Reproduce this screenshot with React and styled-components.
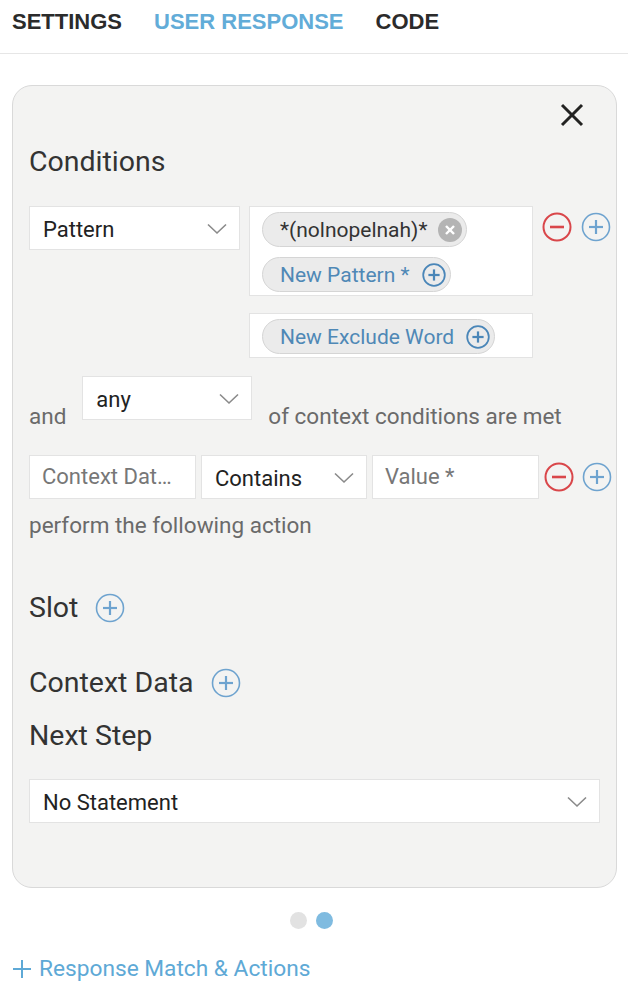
import React from 'react';
import styled, { createGlobalStyle } from 'styled-components';

const GlobalStyle = createGlobalStyle`
  * { box-sizing: border-box; }
  body {
    margin: 0;
    background: #fff;
    font-family: Roboto, "Noto Sans", sans-serif;
    color: #333;
  }
`;

const Chevron = () => (
  <svg width="20" height="12" viewBox="0 0 20 12">
    <polyline points="1,1.5 10,10 19,1.5" fill="none" stroke="#8a8a8a" strokeWidth="1.6" />
  </svg>
);

const CircleIcon = ({ kind = 'plus', color, size = 30, stroke = 1.6 }) => (
  <svg width={size} height={size} viewBox="0 0 30 30">
    <circle cx="15" cy="15" r="13.5" fill="none" stroke={color} strokeWidth={stroke} />
    <line x1="8" y1="15" x2="22" y2="15" stroke={color} strokeWidth={stroke + 0.6} />
    {kind === 'plus' && (
      <line x1="15" y1="8" x2="15" y2="22" stroke={color} strokeWidth={stroke + 0.6} />
    )}
  </svg>
);

const RemoveDot = () => (
  <svg width="24" height="24" viewBox="0 0 24 24">
    <circle cx="12" cy="12" r="12" fill="#b4b4b4" />
    <line x1="8" y1="8" x2="16" y2="16" stroke="#fff" strokeWidth="2.4" />
    <line x1="16" y1="8" x2="8" y2="16" stroke="#fff" strokeWidth="2.4" />
  </svg>
);

const CloseIcon = () => (
  <svg width="24" height="24" viewBox="0 0 24 24">
    <line x1="2" y1="2" x2="22" y2="22" stroke="#222" strokeWidth="3" />
    <line x1="22" y1="2" x2="2" y2="22" stroke="#222" strokeWidth="3" />
  </svg>
);

const Select = ({ value, width, full }) => (
  <SelectBox $width={width} $full={full}>
    <span>{value}</span>
    <Chevron />
  </SelectBox>
);

const RowButtons = ({ offset }) => (
  <IconGroup $offset={offset}>
    <CircleIcon kind="minus" color="#d9464a" stroke={2} />
    <CircleIcon kind="plus" color="#6ea3cf" />
  </IconGroup>
);

const App = () => (
  <>
    <GlobalStyle />
    <Tabs>
      <Tab>SETTINGS</Tab>
      <Tab $active>USER RESPONSE</Tab>
      <Tab>CODE</Tab>
    </Tabs>
    <Main>
      <Card>
        <CloseRow>
          <CloseIcon />
        </CloseRow>
        <Heading>Conditions</Heading>

        <PatternRow>
          <Select value="Pattern" width={211} />
          <ChipBox $height={90}>
            <Chip>
              *(nolnopelnah)*
              <RemoveDot />
            </Chip>
            <Chip $action>
              New Pattern *
              <CircleIcon color="#4a86b8" size={24} stroke={2.2} />
            </Chip>
          </ChipBox>
          <RowButtons offset={6} />
        </PatternRow>

        <ExcludeRow>
          <ChipBox $height={45}>
            <Chip $action>
              New Exclude Word
              <CircleIcon color="#4a86b8" size={24} stroke={2.2} />
            </Chip>
          </ChipBox>
        </ExcludeRow>

        <AndRow>
          <Label $top={28}>and</Label>
          <Select value="any" width={170} />
          <Label $top={28}>of context conditions are met</Label>
        </AndRow>

        <ContextRow>
          <Field $width={167}>Context Data *</Field>
          <Select value="Contains" width={166} />
          <Field $width={167}>Value *</Field>
          <RowButtons offset={0} />
        </ContextRow>

        <Label $top={14}>perform the following action</Label>

        <HeadingRow $top={54}>
          Slot
          <CircleIcon color="#6ea3cf" />
        </HeadingRow>
        <HeadingRow $top={41}>
          Context Data
          <CircleIcon color="#6ea3cf" />
        </HeadingRow>
        <HeadingRow $top={19}>Next Step</HeadingRow>

        <NextStep>
          <Select value="No Statement" full />
        </NextStep>
      </Card>

      <Dots>
        <Dot />
        <Dot $active />
      </Dots>

      <AddLink>
        <svg width="20" height="20" viewBox="0 0 20 20">
          <line x1="10" y1="1" x2="10" y2="19" stroke="#5ea9d6" strokeWidth="2" />
          <line x1="1" y1="10" x2="19" y2="10" stroke="#5ea9d6" strokeWidth="2" />
        </svg>
        Response Match &amp; Actions
      </AddLink>
    </Main>
  </>
);

const Tabs = styled.nav`
  display: flex;
  gap: 32px;
  height: 54px;
  padding: 9px 12px 0;
  border-bottom: 1px solid #e6e6e6;
`;

const Tab = styled.div`
  font-family: "Liberation Sans", Arial, sans-serif;
  font-weight: 700;
  font-size: 22px;
  line-height: 26px;
  color: ${p => (p.$active ? '#62acd8' : '#2b2b2b')};
`;

const Main = styled.main`
  padding: 31px 11px 10px 12px;
`;

const Card = styled.section`
  display: flex;
  flex-direction: column;
  background: #f3f3f2;
  border: 1px solid #d9d9d9;
  border-radius: 20px;
  padding: 17px 4px 64px 16px;
`;

const CloseRow = styled.div`
  display: flex;
  justify-content: flex-end;
  padding-right: 28px;
  height: 24px;
`;

const Heading = styled.h2`
  margin: 18px 0 0;
  font-size: 28.5px;
  font-weight: 400;
  line-height: 34px;
  color: #333;
`;

const HeadingRow = styled(Heading).attrs({ as: 'div' })`
  display: flex;
  align-items: center;
  gap: 17px;
  margin-top: ${p => p.$top}px;
`;

const PatternRow = styled.div`
  display: flex;
  align-items: flex-start;
  gap: 9px;
  margin-top: 27px;
`;

const SelectBox = styled.div`
  display: flex;
  align-items: center;
  justify-content: space-between;
  flex: ${p => (p.$full ? '1' : 'none')};
  width: ${p => (p.$full ? 'auto' : `${p.$width}px`)};
  height: 44px;
  padding: 2px 12px 0 13px;
  background: #fff;
  border: 1px solid #e3e3e3;
  font-size: 22px;
  color: #222;
`;

const ChipBox = styled.div`
  display: flex;
  flex-direction: column;
  align-items: flex-start;
  gap: 10px;
  width: 284px;
  height: ${p => p.$height}px;
  padding: 5px 12px 0;
  background: #fff;
  border: 1px solid #e3e3e3;
`;

const Chip = styled.div`
  display: flex;
  align-items: center;
  gap: ${p => (p.$action ? '12px' : '11px')};
  height: 35px;
  padding: 0 4px 0 17px;
  border-radius: 18px;
  background: #ebebeb;
  border: 1px solid #d5d5d5;
  font-size: 21px;
  color: ${p => (p.$action ? '#4f88b6' : '#333')};
`;

const IconGroup = styled.div`
  display: flex;
  flex-shrink: 0;
  gap: 9px;
  margin-top: ${p => p.$offset}px;
`;

const ExcludeRow = styled.div`
  display: flex;
  margin-top: 17px;
  padding-left: 220px;
`;

const AndRow = styled.div`
  display: flex;
  align-items: flex-start;
  gap: 16px;
  margin-top: 18px;
`;

const Label = styled.div`
  margin-top: ${p => p.$top}px;
  font-size: 22.5px;
  line-height: 24px;
  color: #6a6a6a;
`;

const ContextRow = styled.div`
  display: flex;
  align-items: center;
  gap: 5px;
  margin-top: 27px;

  & > ${IconGroup} {
    gap: 8px;
  }
`;

const Field = styled.div`
  flex-shrink: 0;
  width: ${p => p.$width}px;
  height: 44px;
  line-height: 42px;
  padding: 0 12px;
  background: #fff;
  border: 1px solid #e3e3e3;
  font-size: 22px;
  color: #777;
  white-space: nowrap;
  overflow: hidden;
  text-overflow: ellipsis;
`;

const NextStep = styled.div`
  display: flex;
  margin: 26px 12px 0 0;
`;

const Dots = styled.div`
  display: flex;
  justify-content: center;
  gap: 9px;
  margin-top: 24px;
  padding-right: 6px;
`;

const Dot = styled.span`
  width: 17px;
  height: 17px;
  border-radius: 50%;
  background: ${p => (p.$active ? '#7fbbe0' : '#e2e2e2')};
`;

const AddLink = styled.div`
  display: flex;
  align-items: center;
  gap: 7px;
  margin-top: 26px;
  font-size: 22.7px;
  line-height: 28px;
  color: #5ea9d6;
`;

export default App;
